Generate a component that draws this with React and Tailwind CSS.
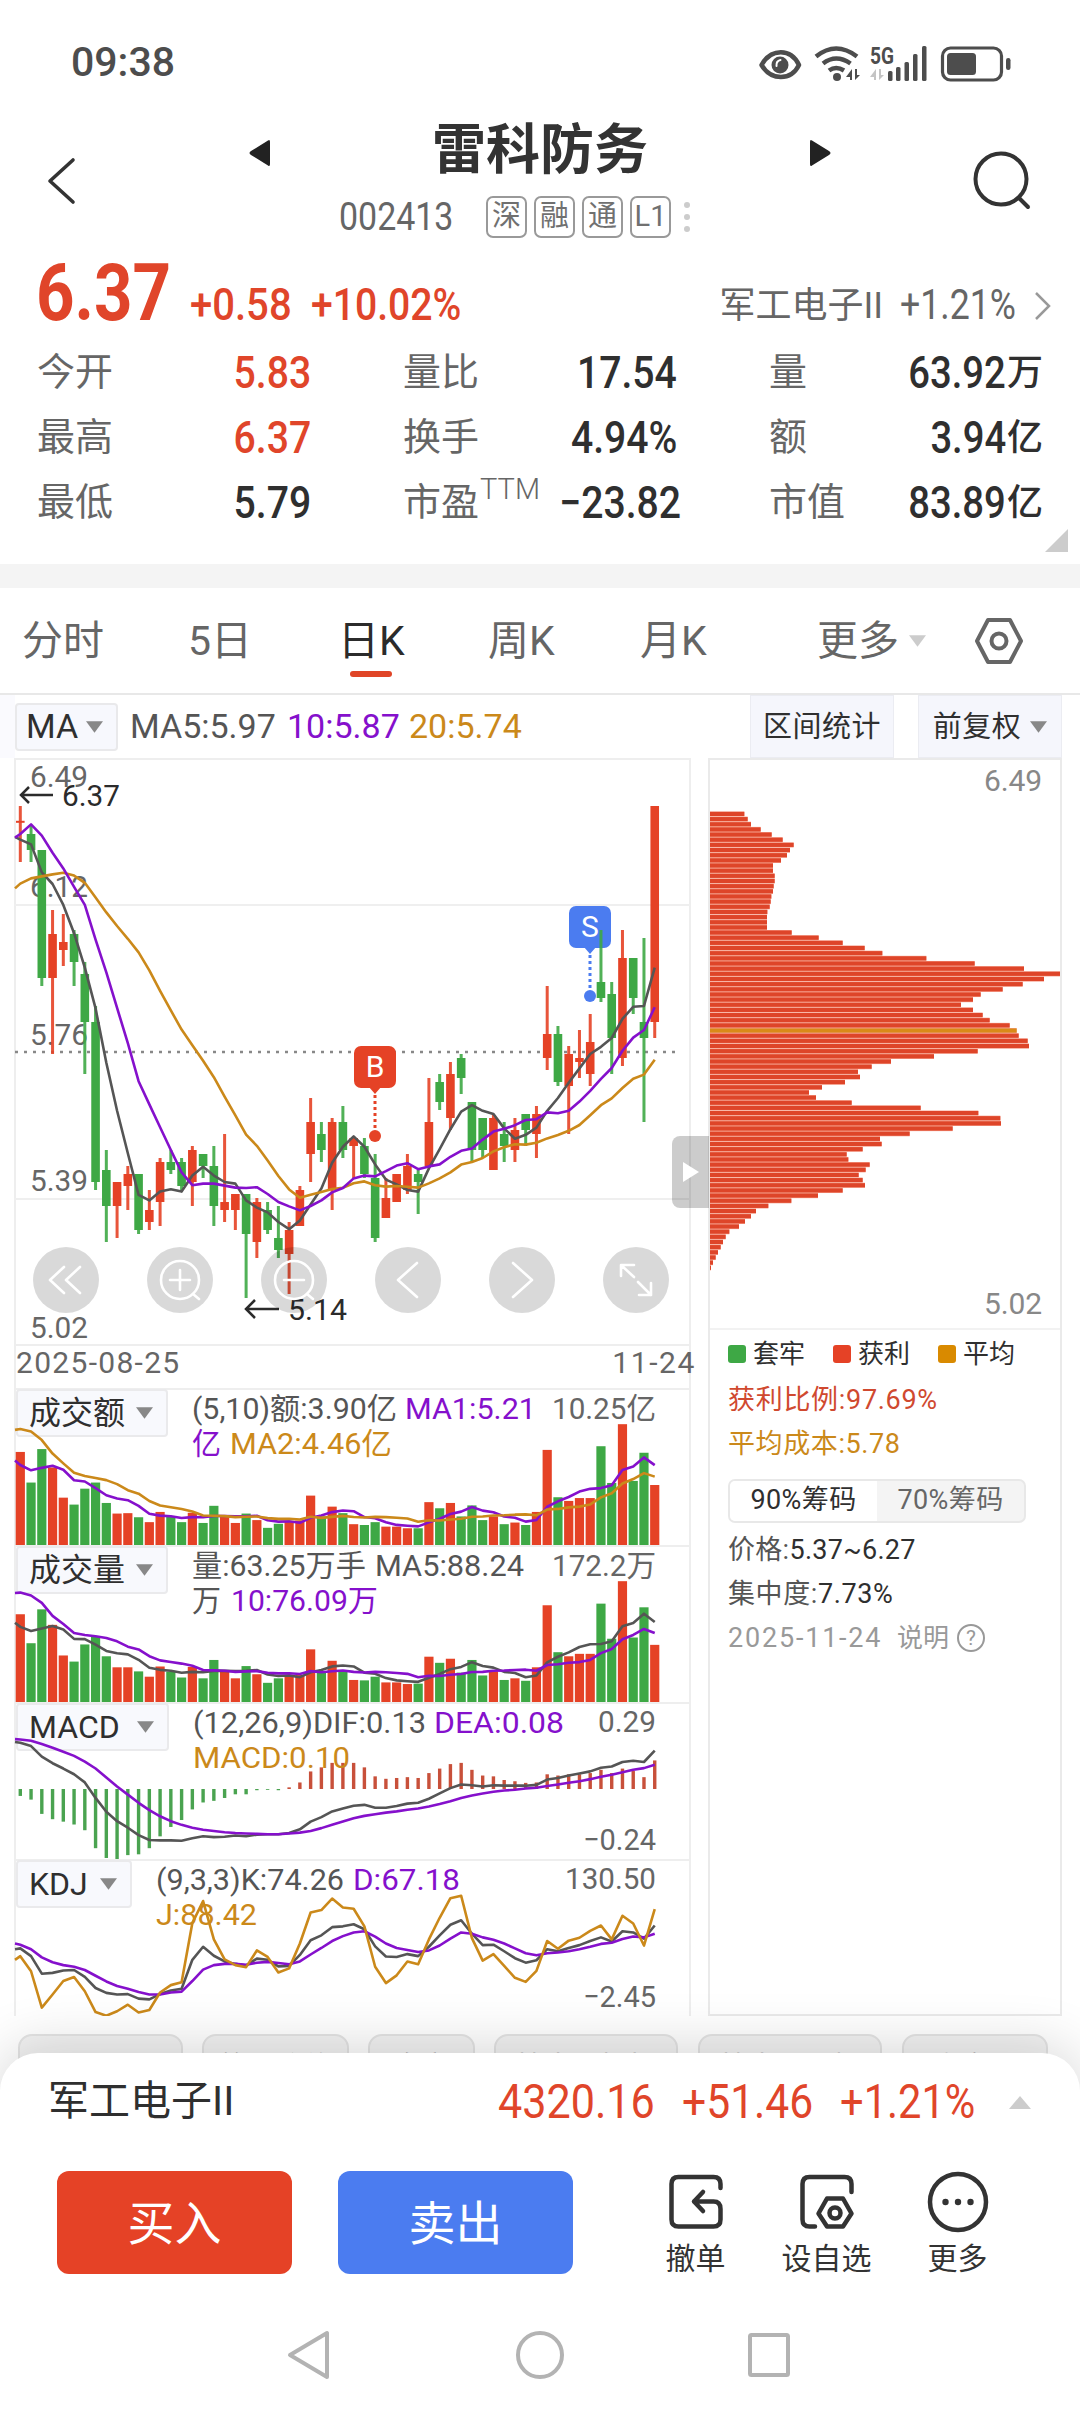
import React from 'react';
import { clsx } from 'clsx';

const RED = '#e54226';
const GREEN = '#3ea845';
const PURPLE = '#8510cc';
const GOLD = '#cb891a';
const GRAY = '#555555';
const STEP = 10.753;
const cx = (i) => 6.3 + STEP * i;

// [high, open/close top, open/close bottom, low, up?] in cents
const candles = [
  [637, 633.3, 632.8, 623, 1], [632, 630, 626, 623, 0], [626, 626, 594, 592, 0], [611, 605, 594, 575, 1],
  [610, 603, 601, 597, 1], [606, 605, 598, 592, 0], [598, 595, 583, 570, 0], [587, 583, 543, 541, 0],
  [551, 546, 537, 528, 0], [543, 543, 537, 529, 1], [547, 545, 542, 536, 1], [545, 545, 531, 530, 0],
  [541, 536, 533, 531, 1], [549, 548, 538, 532, 1], [551, 548, 546, 545, 0], [549, 548, 542, 541, 0],
  [552, 551, 543, 537, 1], [550, 550, 547, 544, 0], [552, 547, 537, 532, 0], [555, 538, 536, 533, 1],
  [540, 540, 536, 531, 1], [540, 540, 530, 514, 0], [539, 538, 528, 524, 1], [538, 536, 531, 530, 0],
  [537, 529, 526, 524, 0], [533, 531, 525, 515, 1], [542, 541, 532, 532, 1], [564, 558, 550, 543, 1],
  [558, 555, 551, 548, 0], [559, 558, 541, 536, 1], [562, 558, 551, 549, 0], [554, 554, 552, 544, 1],
  [554, 552, 545, 544, 0], [550, 544, 529, 528, 0], [544, 539, 534, 534, 1], [545, 545, 538, 538, 1],
  [550, 547, 541, 540, 1], [546, 545, 543, 535, 0], [569, 558, 547, 547, 1], [570, 568, 563, 561, 0],
  [573, 570, 559, 556, 1], [575, 574, 569, 565, 0], [563, 563, 551, 548, 0], [559, 559, 551, 549, 0],
  [560, 559, 546, 546, 1], [558, 555, 552, 548, 0], [559, 556, 551, 548, 1], [560, 560, 556, 552, 0],
  [562, 560, 555, 549, 1], [592, 580, 574, 571, 1], [582, 580, 568, 567, 0], [577, 575, 567, 555, 1],
  [581, 574, 573, 569, 1], [585, 578, 570, 567, 1], [606, 593, 589, 588, 0], [593, 590, 579, 570, 0],
  [606, 599, 574, 572, 1], [599, 599, 589, 585, 0], [604, 583, 579, 558, 0], [637, 637, 583, 579, 1],
];
const closes = candles.map((c) => (c[4] ? c[1] : c[2]));

const average = (data, n, seed) =>
  data.map((_, i) => (i < n - 1 ? seed[i] : data.slice(i - n + 1, i + 1).reduce((a, b) => a + b, 0) / n));

const ma5 = average(closes, 5, [628.6, 627.4, 620.4, 617.5]);
const ma10 = average(closes, 10, [630, 632.4, 629.6, 625.3, 621.4, 616.8, 612.3, 603.6, 595.4]);
const ma20 = average(closes, 20, [617.6, 618.9, 619.4, 619.9, 620.3, 619.6, 617.8, 614.1, 610.4, 607, 603.8, 600.4, 595.9, 590.8, 585.9, 581.1, 577.2, 573.3, 569.2]);

const amount = [228, 153, 235, 190, 116, 99, 138, 153, 103, 77, 78, 68, 56, 81, 70, 56, 79, 54, 96, 70, 54, 77, 61, 42, 52, 58, 60, 121, 70, 94, 78, 51, 49, 56, 45, 45, 41, 41, 105, 90, 103, 70, 97, 61, 70, 51, 55, 49, 81, 233, 117, 108, 115, 115, 242, 152, 296, 157, 226, 147];
const volume = [215, 144, 227, 189, 114, 99, 141, 160, 112, 85, 85, 75, 62, 87, 74, 60, 86, 58, 103, 75, 58, 88, 68, 47, 58, 65, 66, 129, 75, 101, 76, 54, 53, 62, 48, 48, 44, 45, 111, 96, 106, 72, 103, 65, 75, 54, 58, 52, 85, 237, 122, 112, 118, 118, 241, 155, 296, 158, 232, 140];

const macdBars = [-17, -26, -61, -74, -80, -87, -101, -145, -169, -172, -162, -160, -145, -116, -93, -76, -50, -33, -29, -22, -13, -13, -3, -2, -3, 4, 16, 43, 53, 64, 64, 64, 53, 31, 25, 27, 29, 27, 39, 50, 61, 64, 47, 33, 31, 22, 19, 15, 16, 36, 33, 36, 36, 39, 47, 39, 50, 44, 29, 70];
const dif = [888, 896, 922, 938, 951, 965, 985, 1023, 1057, 1080, 1096, 1114, 1126, 1127, 1127, 1128, 1122, 1117, 1119, 1118, 1115, 1117, 1113, 1112, 1112, 1109, 1100, 1081, 1070, 1056, 1049, 1042, 1040, 1047, 1047, 1043, 1037, 1035, 1025, 1012, 999, 990, 992, 995, 992, 993, 993, 993, 991, 978, 974, 968, 963, 958, 949, 946, 935, 932, 935, 907].map((v) => v - 788);
const dea = [880, 883, 891, 900, 910, 920, 934, 951, 973, 995, 1015, 1035, 1053, 1068, 1080, 1089, 1096, 1101, 1104, 1107, 1109, 1110, 1111, 1112, 1112, 1110, 1108, 1104, 1097, 1089, 1081, 1073, 1067, 1063, 1059, 1056, 1052, 1049, 1044, 1038, 1031, 1023, 1017, 1012, 1008, 1005, 1003, 1000, 998, 994, 990, 986, 982, 977, 971, 966, 960, 954, 950, 942].map((v) => v - 788);
const kLine = [1392, 1411, 1454, 1452, 1446, 1445, 1462, 1489, 1501, 1505, 1504, 1515, 1517, 1504, 1495, 1491, 1420, 1388, 1410, 1424, 1430, 1434, 1417, 1420, 1436, 1435, 1408, 1372, 1360, 1340, 1338, 1333, 1345, 1387, 1412, 1413, 1406, 1411, 1388, 1360, 1334, 1323, 1356, 1384, 1383, 1399, 1416, 1427, 1421, 1394, 1399, 1391, 1384, 1374, 1365, 1375, 1350, 1353, 1368, 1336].map((v) => v - 1173);
const dLine = [1383, 1394, 1414, 1426, 1433, 1437, 1445, 1459, 1473, 1484, 1491, 1499, 1505, 1505, 1500, 1498, 1472, 1444, 1433, 1430, 1430, 1432, 1427, 1425, 1428, 1431, 1424, 1407, 1391, 1374, 1362, 1353, 1350, 1363, 1380, 1391, 1396, 1401, 1397, 1385, 1368, 1353, 1356, 1365, 1371, 1380, 1392, 1404, 1409, 1404, 1402, 1399, 1394, 1388, 1381, 1378, 1369, 1363, 1365, 1356].map((v) => v - 1173);
const jLine = [1411, 1448, 1537, 1505, 1472, 1462, 1497, 1548, 1557, 1546, 1530, 1549, 1543, 1500, 1482, 1475, 1330, 1276, 1370, 1419, 1433, 1438, 1397, 1413, 1451, 1441, 1380, 1304, 1298, 1270, 1292, 1295, 1338, 1437, 1477, 1458, 1424, 1431, 1370, 1317, 1269, 1263, 1367, 1422, 1406, 1435, 1464, 1474, 1447, 1374, 1393, 1373, 1366, 1349, 1336, 1370, 1312, 1331, 1385, 1296].map((v) => v - 1173);

const chips = [103, 113, 123, 152, 185, 218, 251, 240, 231, 213, 189, 189, 194, 194, 191, 189, 184, 182, 179, 172, 171, 171, 171, 245, 326, 398, 464, 517, 649, 794, 942, 1050, 1002, 938, 878, 812, 789, 753, 789, 818, 839, 899, 920, 926, 953, 957, 803, 672, 543, 485, 444, 450, 405, 336, 297, 318, 425, 632, 805, 871, 873, 728, 599, 510, 515, 458, 410, 415, 479, 467, 446, 458, 465, 398, 324, 244, 175, 138, 123, 105, 87, 58, 47, 39, 32, 24, 17, 9, 3];

const points = (data, y, start) => [[1, start], ...data.map((v, i) => [cx(i), v])].map(([x, v]) => `${x},${y(v)}`).join(' ');

const Line = ({ data, y, start, color }) => (
  <polyline points={points(data, y, start)} fill="none" stroke={color} strokeWidth="2.6" strokeLinejoin="round" />
);

const Label = ({ x, y, w, fill = '#666', end, children }) => (
  <text x={x} y={y} fill={fill} fontSize="30" textAnchor={end ? 'end' : 'start'} textLength={w} lengthAdjust="spacingAndGlyphs">{children}</text>
);

const Marker = ({ x, y, color, letter }) => (
  <g>
    <rect x={x - 21} y={y} width="42" height="42" rx="7" fill={color} />
    <path d={`M${x - 6} ${y + 41}h12l-6 7z`} fill={color} />
    <path d={`M${x} ${y + 49}v38`} stroke={color} strokeWidth="3" strokeDasharray="3 3" />
    <circle cx={x} cy={y + 90} r="6" fill={color} />
    <text x={x} y={y + 31} fill="#fff" fontSize="30" textAnchor="middle">{letter}</text>
  </g>
);

const toolIcons = [
  <path d="M-2-13-16 0-2 13M14-13 0 0l14 13" />,
  <><circle r="19" /><path d="M-10 0h20M0-10v20M13 14l6 5" /></>,
  <><circle r="19" /><path d="M-10 0h20M13 14l6 5" /></>,
  <path d="M9-17-10 0 9 17" />,
  <path d="M-9-17 10 0-9 17" />,
  <path d="M-2-15h-13V-4M-14-14-2-3M2 2l13 13M15 3v12H3" />,
];

const KChart = () => {
  const y = (p) => (649 - p) * 4;
  return (
    <svg width="676" height="588" className="block">
      <path d="M0 147h676M0 441h676" stroke="#efefef" strokeWidth="2" />
      <path d="M1 294h665" stroke="#888" strokeWidth="2.6" strokeDasharray="3 6" />
      <Marker x={361} y={288} color={RED} letter="B" />
      <Marker x={576} y={148} color="#4b7cf0" letter="S" />
      <Label x={16} y={29} w={58}>6.49</Label>
      <Label x={16} y={139} w={58}>6.12</Label>
      <Label x={16} y={287} w={58}>5.76</Label>
      <Label x={16} y={433} w={58}>5.39</Label>
      <Label x={16} y={580} w={58}>5.02</Label>
      {candles.map(([h, t, b, l, up], i) => (
        <g key={i} fill={up ? RED : GREEN}>
          <rect x={cx(i) - 1.5} y={y(h)} width="3" height={(h - l) * 4} opacity="0.9" />
          <rect x={cx(i) - 4.3} y={y(t)} width="8.6" height={Math.max((t - b) * 4, 2)} />
        </g>
      ))}
      <Line data={ma5} y={y} start={629.3} color={GRAY} />
      <Line data={ma20} y={y} start={616.4} color={GOLD} />
      <Line data={ma10} y={y} start={629.1} color={PURPLE} />
      <g fill="none" stroke="#2b2b2b" strokeWidth="2.5">
        <path d="M39 37H7M15 29 7 37l8 8M265 551h-33M241 542l-9 9 9 9" />
      </g>
      <Label x={48} y={48} w={58} fill="#2b2b2b">6.37</Label>
      <Label x={274} y={562} w={59} fill="#2b2b2b">5.14</Label>
      {toolIcons.map((icon, i) => (
        <g key={i} transform={`translate(${52 + 114 * i} 522)`}>
          <circle r="33" fill="#000" fillOpacity="0.15" />
          <g fill="none" stroke="#fff" strokeWidth="2.6" strokeLinecap="round" strokeLinejoin="round">{icon}</g>
        </g>
      ))}
    </svg>
  );
};

const Down = ({ className }) => (
  <svg viewBox="0 0 18 12" className={clsx('w-[17px] h-[12px]', className)}><path d="M0 0h18L9 12z" fill="currentColor" /></svg>
);

const Panel = ({ name, width, children }) => (
  <div className="relative h-[157px] border-t-2 border-[#eeeeee]">
    <div className={clsx('h-[48px] flex items-center justify-between pl-[11px] pr-[13px] bg-[#f8f9fd] border-2 border-[#eaeaec] rounded-[4px] -mt-[1px]', width)}>
      <span className="text-[32px] leading-none text-[#2f2f2f]">{name}</span>
      <Down className="text-[#888]" />
    </div>
    <svg width="676" height="157" className="absolute left-0 -top-[2px]">
      {children}
    </svg>
  </div>
);

const Bars = ({ data }) => data.map((v, i) => (
  <rect key={i} x={cx(i) - 4.6} y={157 - v / 2.45} width="9.2" height={v / 2.45} fill={candles[i][4] ? RED : GREEN} />
));

const fromBottom = (v) => 157 - v / 2.45;
const fromTop = (v) => v / 2.45;

const Cell = ({ label, value, red, sup, pl, unit }) => (
  <div className={clsx('flex items-center justify-between', pl)}>
    <span className="text-[38px] text-[#666] whitespace-nowrap flex">
      {label}
      {sup && <sup className="text-[29px] leading-none font-light top-[1px] relative ml-[1px]">{sup}</sup>}
    </span>
    <span className={clsx('flex items-center font-medium', red ? 'text-[#e0452a]' : 'text-[#2f2f2f]')}>
      <span className={clsx('text-[45px] origin-right', unit ? 'scale-x-[0.85]' : 'scale-x-[0.87] translate-x-[1px]')}>{value}</span>
      {unit && <span className="text-[36px] ml-[1px]">{unit}</span>}
    </span>
  </div>
);

const StatusBar = () => (
  <div className="h-[112px] pt-[14px] pl-[71px] pr-[61px] flex items-center justify-between">
    <span className="text-[41px] font-medium text-[#4d4d4d]">09:38</span>
    <svg width="262" height="44" viewBox="0 0 262 44" className="text-[#4d4d4d]">
      <g transform="translate(2 4)">
        <path d="M2.500 20C12 3 32 3 40 20 32 36 12 36 2.500 20z" fill="none" stroke="currentColor" strokeWidth="4.500" strokeLinejoin="round" />
        <circle cx="21" cy="20" r="8.500" fill="currentColor" />
        <path d="M17.500 21q-.5-5 4-6" fill="none" stroke="#fff" strokeWidth="2" strokeLinecap="round" />
        <g fill="none" stroke="currentColor" strokeWidth="4.500">
          <path d="M57 11.500q20-16 41 0M64 18.500q13-10 27.500 0M70 25.500q7-5 15 0" />
        </g>
        <circle cx="78" cy="32" r="4" fill="currentColor" />
        <path d="M93 24v11h-2v-3h-4zM96 24v11l5-5h-3v-6z" fill="currentColor" />
        <path d="M117 24v11h-2v-3h-4zM120 24v11l5-5h-3v-6z" fill="#c4c4c4" />
        <text x="111" y="19" fontSize="24" fontWeight="700" textLength="24" lengthAdjust="spacingAndGlyphs" fill="currentColor">5G</text>
        <g fill="currentColor">
          <rect x="129" y="26" width="4.500" height="10" rx="1.500" />
          <rect x="137" y="22" width="4.500" height="14" rx="1.500" />
          <rect x="145.500" y="17" width="4.500" height="19" rx="1.500" />
          <rect x="154" y="9" width="4.500" height="27" rx="1.500" />
          <rect x="163" y="1" width="4.500" height="35" rx="1.500" />
        </g>
        <rect x="183.500" y="3" width="59" height="32" rx="8" fill="none" stroke="currentColor" strokeWidth="3.200" />
        <rect x="188" y="8" width="29" height="22" rx="3.500" fill="currentColor" />
        <rect x="247" y="13" width="4.500" height="12" rx="2.200" fill="currentColor" />
      </g>
    </svg>
  </div>
);

const Header = () => (
  <div className="h-[138px] flex">
    <div className="w-[249px] pl-[46px] pt-[45px]">
      <svg width="30" height="48" fill="none" stroke="#333" strokeWidth="3.600" strokeLinecap="round" strokeLinejoin="round"><path d="M27 3 4 24l23 21" /></svg>
    </div>
    <svg width="21" height="28" className="mt-[27px]"><path d="M19 1.500Q21 0 21 3v22q0 3-2 1.500L2 16q-3-2 0-4z" fill="#222" /></svg>
    <div className="w-[540px] pt-[12px]">
      <h1 className="text-[54px] leading-[54px] font-bold text-[#333] text-center">雷科防务</h1>
      <div className="mt-[18px] pl-[69px] flex items-center">
        <span className="w-[147px] text-[39px] leading-[42px] text-[#666] origin-left scale-x-[0.87]">002413</span>
        <div className="flex gap-[7px]">
          {['深', '融', '通', 'L1'].map((t) => (
            <span key={t} className="w-[41px] h-[42px] border-2 border-[#999] rounded-[7px] text-[29px] leading-[37px] text-center text-[#707070]">{t}</span>
          ))}
        </div>
        <div className="ml-[13px] flex flex-col gap-[6px]">
          <i className="w-[6px] h-[6px] rounded-full bg-[#ccc]" />
          <i className="w-[6px] h-[6px] rounded-full bg-[#ccc]" />
          <i className="w-[6px] h-[6px] rounded-full bg-[#ccc]" />
        </div>
      </div>
    </div>
    <svg width="21" height="28" className="mt-[27px]"><path d="M2 1.500Q0 0 0 3v22q0 3 2 1.500L19 16q3-2 0-4z" fill="#222" /></svg>
    <svg width="62" height="62" className="mt-[38px] ml-[140px]" fill="none" stroke="#333" strokeWidth="4" strokeLinecap="round"><circle cx="30" cy="29" r="25.500" /><path d="m48 48 9 9" /></svg>
  </div>
);

const Quote = () => (
  <div className="h-[314px]">
    <div className="h-[90px] pt-[4px] flex items-baseline text-[#e0452a] font-medium">
      <span className="ml-[36px] w-[154px] text-[80px] leading-[78px] font-bold origin-left scale-x-[0.84]">6.37</span>
      <span className="w-[121px] text-[45px] origin-left scale-x-[0.89]">+0.58</span>
      <span className="text-[45px] origin-left scale-x-[0.87]">+10.02%</span>
      <span className="ml-auto text-[36px] text-[#666] font-normal relative -top-[2px]">军工电子II</span>
      <span className="w-[134px] ml-[17px] text-[42px] text-[#666] font-normal origin-left scale-x-[0.85] relative -top-[1px]">+1.21%</span>
      <svg width="18" height="28" className="mr-[28px]" fill="none" stroke="#999" strokeWidth="2.500"><path d="m2 1 13 13L2 27" /></svg>
    </div>
    <div className="grid grid-cols-[310px_366px_367px] grid-rows-[65px_65px_65px]">
      <Cell pl="pl-[37px]" label="今开" value="5.83" red />
      <Cell pl="pl-[93px]" label="量比" value="17.54" />
      <Cell pl="pl-[93px]" label="量" value="63.92" unit="万" />
      <Cell pl="pl-[37px]" label="最高" value="6.37" red />
      <Cell pl="pl-[93px]" label="换手" value="4.94%" />
      <Cell pl="pl-[93px]" label="额" value="3.94" unit="亿" />
      <Cell pl="pl-[37px]" label="最低" value="5.79" />
      <Cell pl="pl-[93px]" label="市盈" sup="TTM" value="−23.82" />
      <Cell pl="pl-[93px]" label="市值" value="83.89" unit="亿" />
    </div>
    <svg width="23" height="23" className="ml-[1045px] -mt-[6px]"><path d="M23 0v23H0z" fill="#ccc" /></svg>
  </div>
);

const Tabs = () => (
  <div className="h-[107px] pt-[3px] border-b-2 border-[#e8e8e8] flex items-center text-[41px] text-[#666] whitespace-nowrap">
    <span className="w-[166px] pl-[22px]">分时</span>
    <span className="w-[152px] pl-[22px]">5日</span>
    <span className="w-[148px] pl-[20px] text-[#2b2b2b] relative">日K
      <i className="absolute left-[32px] top-[60px] w-[42px] h-[6px] rounded-full bg-[#e04527]" />
    </span>
    <span className="w-[152px] pl-[22px]">周K</span>
    <span className="w-[199px] pl-[22px]">月K</span>
    <span>更多</span>
    <Down className="ml-[10px] -mt-[2px] text-[#ccc]" />
    <svg width="50" height="50" className="ml-[48px] -mt-[3px]" fill="none" stroke="#666" strokeWidth="4" strokeLinejoin="round"><path d="M14 4h22l11 21-11 21H14L3 25z" /><circle cx="25" cy="25" r="7.500" /></svg>
  </div>
);

const MaRow = () => (
  <div className="h-[63px] flex items-center text-[34px] whitespace-nowrap">
    <div className="w-[15px] h-full bg-[#fafafe]" />
    <div className="w-[103px] h-[48px] flex items-center justify-between pl-[9px] pr-[13px] bg-[#f7f8fd] border-2 border-[#e9e9eb] rounded-[4px] text-[#2f2f2f]">
      MA <Down className="text-[#888]" />
    </div>
    <span className="ml-[12px] w-[157px] text-[#555]">MA5:5.97</span>
    <span className="w-[122px] text-[#8510cc]">10:5.87</span>
    <span className="text-[#cb891a]">20:5.74</span>
    <div className="ml-auto w-[144px] h-full pt-[2px] flex items-center justify-center bg-[#f5f6fc] border border-[#ebecf2] text-[29px] tracking-[0.5px] text-[#2f2f2f]">区间统计</div>
    <div className="ml-[24px] mr-[18px] w-[144px] h-full pt-[2px] flex items-center justify-center gap-[9px] bg-[#f5f6fc] border border-[#ebecf2] text-[29px] tracking-[0.5px] text-[#2f2f2f]">
      前复权 <Down className="text-[#888] -mt-[2px]" />
    </div>
  </div>
);

const ChipPanel = () => (
  <div className="ml-[17px] w-[354px] h-[1258px] border-2 border-[#eaeaea] text-[27px] text-[#2f2f2f]">
    <svg width="350" height="568" className="block">
      {chips.map((v, i) => (
        <g key={i}>
          <rect x="0" y={51.400 + i * 5.157} width={v / 3} height="5.157" fill="#f6a08c" />
          <rect x="0" y={51.900 + i * 5.157} width={v / 3} height="4.100" fill={i === 42 ? '#d98a18' : '#de4529'} />
        </g>
      ))}
      <text x="332" y="31" textAnchor="end" fontSize="30" fill="#888" textLength="58">6.49</text>
      <text x="332" y="554" textAnchor="end" fontSize="30" fill="#888" textLength="58">5.02</text>
    </svg>
    <div className="border-t-2 border-[#f2f2f2] pl-[18px] flex flex-col">
      <div className="h-[48px] flex items-center text-[26px]">
        <i className="w-[18px] h-[18px] rounded-[3px] bg-[#3ea845] mr-[7px]" /><span className="w-[80px]">套牢</span>
        <i className="w-[18px] h-[18px] rounded-[3px] bg-[#e54226] mr-[7px]" /><span className="w-[80px]">获利</span>
        <i className="w-[18px] h-[18px] rounded-[3px] bg-[#d98a00] mr-[7px]" /><span>平均</span>
      </div>
      <div className="h-[44px] leading-[44px] text-[#d0492f] tracking-[0.7px]">获利比例:97.69%</div>
      <div className="h-[44px] leading-[44px] text-[#cb891a] tracking-[0.6px]">平均成本:5.78</div>
      <div className="mt-[13px] w-[298px] h-[44px] flex rounded-[7px] border-2 border-[#e8e8e8] bg-[#f4f4f4] overflow-hidden leading-[38px] tracking-[0.4px] text-center">
        <span className="flex-1 bg-white">90%筹码</span>
        <span className="flex-1 text-[#666]">70%筹码</span>
      </div>
      <div className="mt-[5px] h-[44px] leading-[44px] tracking-[0.3px]"><span className="text-[#555]">价格:</span>5.37~6.27</div>
      <div className="h-[44px] leading-[44px] tracking-[0.6px]"><span className="text-[#555]">集中度:</span>7.73%</div>
      <div className="h-[44px] leading-[44px] text-[#999] flex items-center">
        <span className="w-[169px] tracking-[1.8px]">2025-11-24</span>
        <span className="text-[26px]">说明</span>
        <span className="ml-[8px] w-[28px] h-[28px] border-2 border-[#999] rounded-full text-[21px] leading-[24px] text-center">?</span>
      </div>
    </div>
  </div>
);

const Charts = () => (
  <div className="flex">
    <div className="ml-[14px] w-[677px] relative border-x-2 border-[#eeeeee]">
      <div className="h-[588px] border-y-2 border-[#eeeeee] -ml-[2px]">
        <div className="-mt-[2px] h-[588px]"><KChart /></div>
      </div>
      <div className="h-[42px] flex justify-between items-start -mr-[7px] text-[30px] leading-[33px] text-[#666]">
        <span className="tracking-[1.3px]">2025-08-25</span><span className="tracking-[1.6px]">11-24</span>
      </div>
      <div className="-ml-[2px]">
        <Panel name="成交额" width="ml-[2px] w-[152px]">
          <Bars data={amount} />
          <Line data={average(amount, 5, [196, 183, 189, 194])} y={fromBottom} start={207} color={PURPLE} />
          <Line data={average(amount, 10, [284, 278, 257, 224, 200, 177, 169, 164, 159])} y={fromBottom} start={282} color={GOLD} />
          <Label x={178} y={31} w={205} fill="#555">(5,10)额:3.90亿</Label>
          <Label x={391} y={31} w={131} fill={PURPLE}>MA1:5.21</Label>
          <Label x={178} y={66} fill={PURPLE} w={29}>亿</Label>
          <Label x={216} y={66} w={162} fill={GOLD}>MA2:4.46亿</Label>
          <Label x={642} y={31} w={104} end>10.25亿</Label>
        </Panel>
        <Panel name="成交量" width="ml-[2px] w-[152px]">
          <Bars data={volume} />
          <Line data={average(volume, 5, [184, 174, 180, 186])} y={fromBottom} start={194} color={GRAY} />
          <Line data={average(volume, 10, [268, 261, 243, 211, 191, 169, 164, 161, 157])} y={fromBottom} start={267} color={PURPLE} />
          <Label x={178} y={31} w={174} fill="#555">量:63.25万手</Label>
          <Label x={361} y={31} w={149} fill="#555">MA5:88.24</Label>
          <Label x={178} y={66} w={29} fill="#555">万</Label>
          <Label x={217} y={66} w={147} fill={PURPLE}>10:76.09万</Label>
          <Label x={642} y={31} w={104} end>172.2万</Label>
        </Panel>
        <Panel name="MACD" width="ml-[2px] w-[153px]">
          {macdBars.map((v, i) => (
            <rect key={i} x={cx(i) - 1.7} y={87 - Math.max(v, 0) / 2.45} width="3.4" height={Math.abs(v) / 2.45} fill={v > 0 ? '#c8503a' : '#4aa350'} />
          ))}
          <Line data={dif} y={fromTop} start={98} color={GRAY} />
          <Line data={dea} y={fromTop} start={91} color={PURPLE} />
          <Label x={179} y={31} w={233} fill="#555">(12,26,9)DIF:0.13</Label>
          <Label x={420} y={31} w={130} fill={PURPLE}>DEA:0.08</Label>
          <Label x={179} y={66} w={157} fill={GOLD}>MACD:0.10</Label>
          <Label x={642} y={30} w={58} end>0.29</Label>
          <Label x={642} y={148} w={73} end>−0.24</Label>
        </Panel>
        <Panel name="KDJ" width="ml-[2px] w-[116px]">
          <Line data={kLine} y={fromTop} start={221} color={GRAY} />
          <Line data={dLine} y={fromTop} start={207} color={PURPLE} />
          <Line data={jLine} y={fromTop} start={247} color={GOLD} />
          <Label x={142} y={31} w={188} fill="#555">(9,3,3)K:74.26</Label>
          <Label x={339} y={31} w={107} fill={PURPLE}>D:67.18</Label>
          <Label x={142} y={66} w={101} fill={GOLD}>J:88.42</Label>
          <Label x={642} y={30} w={91} end>130.50</Label>
          <Label x={642} y={148} w={73} end>−2.45</Label>
        </Panel>
      </div>
      <div className="absolute left-[656px] top-[378px] w-[37px] h-[72px] rounded-l-[8px] bg-black/20 flex items-center justify-center">
        <svg width="17" height="20"><path d="M1 0v20l16-10z" fill="#fff" /></svg>
      </div>
    </div>
    <ChipPanel />
  </div>
);

const chipBase = 'h-[60px] border-2 border-[#e4e4e4] bg-[#f3f3f3] rounded-[14px] text-[28px] leading-[28px] pt-[18px] text-center text-[#666] whitespace-nowrap';

const Sheet = () => (
  <div className="relative h-[359px] rounded-t-[38px] bg-white shadow-[0_-6px_56px_rgba(0,0,0,0.16)]">
    <div className="h-[96px] pt-[2px] pl-[48px] pr-[49px] flex items-center text-[41px]">
      <span className="text-[#2f2f2f]">军工电子II</span>
      <div className="ml-auto flex text-[49px] text-[#e0452a]">
        <span className="w-[184px] origin-left scale-x-[0.88]">4320.16</span>
        <span className="w-[158px] origin-left scale-x-[0.87]">+51.46</span>
        <span className="w-[169px] origin-left scale-x-[0.85]">+1.21%</span>
      </div>
      <svg width="22" height="13"><path d="M0 13h22L11 0z" fill="#ccc" /></svg>
    </div>
    <div className="mt-[22px] flex">
      <button className="ml-[57px] w-[235px] h-[103px] pt-[4px] rounded-[12px] bg-[#e54226] text-white text-[47px]">买入</button>
      <button className="ml-[46px] w-[235px] h-[103px] pt-[4px] rounded-[12px] bg-[#4b7cf0] text-white text-[47px]">卖出</button>
      <div className="ml-[57px] flex text-[30px] leading-[34px] text-[#333]">
        <div className="w-[131px] flex flex-col items-center">
          <svg width="60" height="60" className="mt-[1px] mb-[10px]" fill="none" stroke="#333" strokeWidth="4.500" strokeLinecap="round" strokeLinejoin="round">
            <path d="M54.500 16V12q0-7-7-7H12.500q-7 0-7 7v35.500q0 7 7 7h35q7 0 7-7V37q0-7.500-7-7.500H28M37 20 28 29.500 37 39" />
          </svg>
          撤单
        </div>
        <div className="w-[131px] flex flex-col items-center">
          <svg width="60" height="60" className="mt-[1px] mb-[10px]" fill="none" stroke="#333" strokeWidth="4.500" strokeLinecap="round" strokeLinejoin="round">
            <path d="M54.500 20V12q0-7-7-7H12.500q-7 0-7 7v35.500q0 7 7 7H18M30 26.500h16l8.500 15-8.500 13H30l-8.500-13z" />
            <circle cx="38" cy="41" r="5.500" />
          </svg>
          设自选
        </div>
        <div className="w-[131px] flex flex-col items-center">
          <svg width="62" height="62" className="mb-[9px]" fill="none" stroke="#333" strokeWidth="4.500">
            <circle cx="31" cy="31" r="28" />
            <g fill="#333" stroke="none"><circle cx="18.500" cy="31" r="3.200" /><circle cx="31" cy="31" r="3.200" /><circle cx="43.500" cy="31" r="3.200" /></g>
          </svg>
          更多
        </div>
      </div>
    </div>
    <div className="mt-[53px] h-[52px] flex items-center">
      <svg width="44" height="52" className="ml-[286px]" fill="none" stroke="#b3b3b3" strokeWidth="4" strokeLinejoin="round"><path d="M41 4v44L4 26z" /></svg>
      <svg width="50" height="50" className="ml-[185px]" fill="none" stroke="#b3b3b3" strokeWidth="4"><circle cx="25" cy="25" r="22" /></svg>
      <svg width="44" height="46" className="ml-[182px]" fill="none" stroke="#b3b3b3" strokeWidth="4"><rect x="3" y="3" width="38" height="40" rx="1.500" /></svg>
    </div>
  </div>
);

const App = () => {
  return (
    <div className="w-[1080px] h-[2412px] overflow-hidden bg-white font-['Roboto','Noto_Sans_CJK_SC',sans-serif]">
      <StatusBar />
      <Header />
      <Quote />
      <div className="h-[24px] bg-[#f4f4f4]" />
      <Tabs />
      <MaRow />
      <Charts />
      <div className="mt-[18px] -mb-[41px] pl-[18px] flex">
        <div className={clsx(chipBase, 'w-[165px]')}></div>
        <div className={clsx(chipBase, 'ml-[19px] w-[147px]')}>筹码峰值</div>
        <div className={clsx(chipBase, 'ml-[19px] w-[107px]')}>多空</div>
        <div className={clsx(chipBase, 'ml-[19px] w-[184px]')}>技术与指标</div>
        <div className={clsx(chipBase, 'ml-[20px] w-[184px]')}>技术与分析</div>
        <div className={clsx(chipBase, 'ml-[20px] w-[146px]')}>自定义</div>
      </div>
      <Sheet />
    </div>
  );
};

export default App;
